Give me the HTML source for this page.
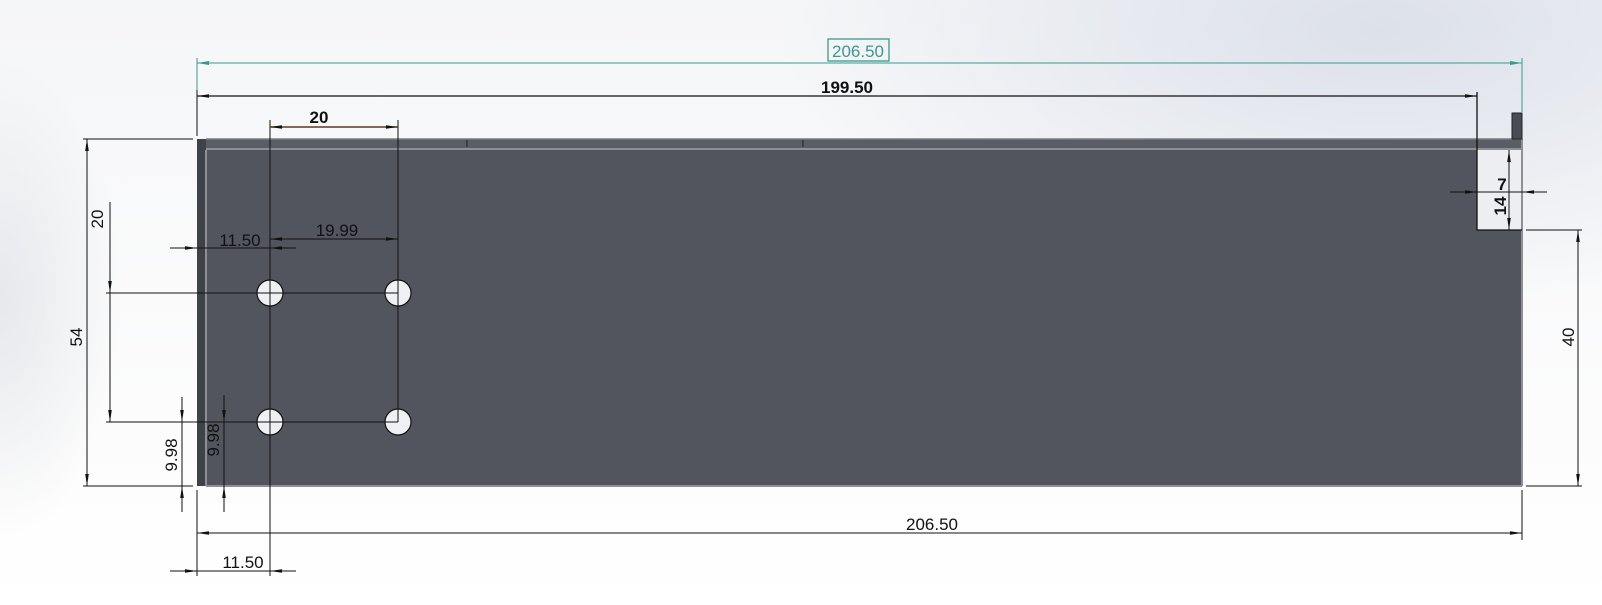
<!DOCTYPE html>
<html><head><meta charset="utf-8"><style>
html,body{margin:0;padding:0;width:1602px;height:605px;overflow:hidden;}
body{background:
 radial-gradient(ellipse 600px 280px at 1380px 30px, rgba(214,219,230,0.8), rgba(214,219,230,0) 100%),
 radial-gradient(ellipse 120px 240px at 0px 300px, rgba(222,224,229,0.7), rgba(222,224,229,0) 100%),
 linear-gradient(#f5f6f8, #fdfdfd 80%, #ffffff);}
svg{position:absolute;left:0;top:0;}
text{font-family:"Liberation Sans",sans-serif;}
</style></head><body>
<svg width="1602" height="605" viewBox="0 0 1602 605">
<defs>
<marker id="a" viewBox="0 0 12 6" refX="12" refY="3" markerWidth="12" markerHeight="6" orient="auto-start-reverse" markerUnits="userSpaceOnUse"><path d="M0,1.2 L12,3 L0,4.8z" fill="#111"/></marker>
<marker id="t" viewBox="0 0 12 6" refX="12" refY="3" markerWidth="12" markerHeight="6" orient="auto-start-reverse" markerUnits="userSpaceOnUse"><path d="M0,1 L12,3 L0,5z" fill="#3a9a8c"/></marker>
</defs>
<path d="M197,139 H1522 V486 H197 Z M1477,150 V230 H1522 V150 Z" fill="#52545e" fill-rule="evenodd"/>
<rect x="1478" y="150" width="43" height="80" fill="#eceef2"/>
<rect x="197" y="139" width="1325" height="11" fill="#5a5c66"/>
<rect x="197" y="139" width="9" height="347" fill="#40424a"/>
<line x1="206" y1="149" x2="1522" y2="149" stroke="#8d8f94" stroke-width="2"/>
<line x1="206" y1="139" x2="1522" y2="139" stroke="#7b7d82" stroke-width="1.5"/>
<line x1="206" y1="150" x2="206" y2="486" stroke="#8d8f94" stroke-width="2"/>
<line x1="206" y1="486" x2="1522" y2="486" stroke="#8d8f94" stroke-width="2"/>
<line x1="1522" y1="139" x2="1522" y2="486" stroke="#8d8f94" stroke-width="2"/>
<line x1="467" y1="140" x2="467" y2="147" stroke="#222" stroke-width="1"/>
<line x1="803" y1="140" x2="803" y2="147" stroke="#222" stroke-width="1"/>
<rect x="1512" y="113" width="10" height="26" fill="#4a4c55" stroke="#222" stroke-width="1"/>
<path d="M1477,92 V230 H1522" fill="none" stroke="#111" stroke-width="1.3"/>
<g fill="#eef0f4" stroke="#111" stroke-width="1.2">
<circle cx="270" cy="293" r="13"/><circle cx="398" cy="293" r="13"/>
<circle cx="270" cy="422" r="13"/><circle cx="398" cy="422" r="13"/>
</g>
<g stroke="#111" stroke-width="1" fill="none">
<line x1="270" y1="120" x2="270" y2="576"/>
<line x1="398" y1="120" x2="398" y2="422"/>
<line x1="106" y1="293" x2="398" y2="293"/>
<line x1="106" y1="422" x2="398" y2="422"/>
<line x1="197" y1="58" x2="197" y2="136" stroke="#3a9a8c"/>
<line x1="197" y1="90" x2="197" y2="136"/>
<line x1="197" y1="490" x2="197" y2="576"/>
<line x1="1522" y1="490" x2="1522" y2="540"/>
<line x1="1522" y1="58" x2="1522" y2="112" stroke="#3a9a8c"/>
<line x1="83" y1="139" x2="193" y2="139"/>
<line x1="83" y1="486" x2="193" y2="486"/>
<line x1="1526" y1="230" x2="1582" y2="230"/>
<line x1="1526" y1="486" x2="1582" y2="486"/>
<line x1="197" y1="63" x2="1522" y2="63" stroke="#3a9a8c" marker-start="url(#t)" marker-end="url(#t)"/>
<line x1="197" y1="96" x2="1477" y2="96" marker-start="url(#a)" marker-end="url(#a)" stroke-width="1.3"/>
<line x1="270" y1="127" x2="398" y2="127" stroke="#5a3a1a" stroke-width="1.5" marker-start="url(#a)" marker-end="url(#a)"/>
<line x1="270" y1="239" x2="398" y2="239" marker-start="url(#a)" marker-end="url(#a)"/>
<line x1="170" y1="248" x2="197" y2="248" marker-end="url(#a)"/>
<line x1="296" y1="248" x2="270" y2="248" marker-end="url(#a)"/>
<line x1="197" y1="248" x2="270" y2="248"/>
<line x1="110" y1="202" x2="110" y2="293" marker-end="url(#a)"/>
<line x1="110" y1="293" x2="110" y2="422" marker-end="url(#a)"/>
<line x1="87" y1="139" x2="87" y2="486" marker-start="url(#a)" marker-end="url(#a)"/>
<line x1="182" y1="397" x2="182" y2="422" marker-end="url(#a)"/>
<line x1="182" y1="512" x2="182" y2="486" marker-end="url(#a)"/>
<line x1="182" y1="422" x2="182" y2="486"/>
<line x1="224" y1="395" x2="224" y2="422" marker-end="url(#a)"/>
<line x1="224" y1="512" x2="224" y2="486" marker-end="url(#a)"/>
<line x1="224" y1="422" x2="224" y2="486"/>
<line x1="197" y1="533" x2="1522" y2="533" marker-start="url(#a)" marker-end="url(#a)"/>
<line x1="170" y1="571" x2="197" y2="571" marker-end="url(#a)"/>
<line x1="296" y1="571" x2="270" y2="571" marker-end="url(#a)"/>
<line x1="197" y1="571" x2="270" y2="571"/>
<line x1="1450" y1="192" x2="1477" y2="192" marker-end="url(#a)"/>
<line x1="1547" y1="192" x2="1522" y2="192" marker-end="url(#a)"/>
<line x1="1477" y1="192" x2="1522" y2="192"/>
<line x1="1509" y1="150" x2="1509" y2="230" marker-start="url(#a)" marker-end="url(#a)"/>
<line x1="1578" y1="230" x2="1578" y2="486" marker-start="url(#a)" marker-end="url(#a)"/>
</g>
<rect x="828" y="39" width="61" height="22" fill="none" stroke="#3a9a8c" stroke-width="1.3"/>
<g font-size="17" fill="#111" text-anchor="middle">
<text x="858" y="57" fill="#3a9a8c">206.50</text>
<text x="847" y="93" font-weight="bold">199.50</text>
<text x="319" y="123" font-weight="bold">20</text>
<text x="337" y="236">19.99</text>
<text x="240" y="246">11.50</text>
<text x="932" y="530">206.50</text>
<text x="243" y="568">11.50</text>
<text x="1502" y="190" font-weight="bold">7</text>
<text transform="translate(103,219) rotate(-90)">20</text>
<text transform="translate(82,337) rotate(-90)">54</text>
<text transform="translate(177,455) rotate(-90)">9.98</text>
<text transform="translate(219,440) rotate(-90)">9.98</text>
<text transform="translate(1506,206) rotate(-90)" font-weight="bold">14</text>
<text transform="translate(1574,337) rotate(-90)">40</text>
</g>
</svg>
</body></html>
